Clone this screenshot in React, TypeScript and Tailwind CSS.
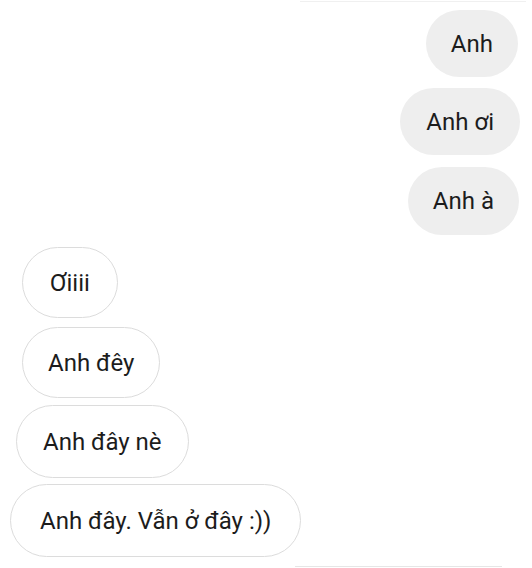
import React from "react";

type Msg = { text: string; mine: boolean; cls: string };

const messages: Msg[] = [
  { text: "Anh", mine: true, cls: "mt-[10px] mr-[14px] h-[67px] px-[25px]" },
  { text: "Anh ơi", mine: true, cls: "mt-[11px] mr-[12px] h-[67px] px-[26px]" },
  { text: "Anh à", mine: true, cls: "mt-[12px] mr-[13px] h-[68px] px-[25px]" },
  { text: "Ơiiii", mine: false, cls: "mt-[12px] ml-[22px] h-[71px] px-[27px]" },
  { text: "Anh đêy", mine: false, cls: "mt-[9px] ml-[22px] h-[71px] px-[25px]" },
  { text: "Anh đây nè", mine: false, cls: "mt-[7px] ml-[16px] h-[73px] px-[26px]" },
  { text: "Anh đây. Vẫn ở đây :))", mine: false, cls: "mt-[6px] ml-[10px] h-[73px] px-[29px]" },
];

const Bubble = ({ msg }: { msg: Msg }) => (
  <div
    className={
      msg.mine
        ? `self-end flex items-center rounded-full bg-[#eeeeee] ${msg.cls}`
        : `self-start flex items-center rounded-full bg-white border border-[#dcdcdc] ${msg.cls}`
    }
  >
    <span className="text-[24px] leading-none text-[#1c1c1c] whitespace-nowrap">{msg.text}</span>
  </div>
);

export default function App() {
  return (
    <div
      className="w-[532px] h-[568px] bg-white overflow-hidden flex flex-col relative"
      style={{ fontFamily: "Roboto, 'Noto Sans', sans-serif" }}
    >
      {messages.map((m, i) => (
        <Bubble key={i} msg={m} />
      ))}
      <div className="absolute top-[1px] left-[300px] right-[6px] h-px bg-[#f0f0f0]" />
      <div className="absolute bottom-[1px] left-[295px] right-[30px] h-px bg-[#e6e6e6]" />
    </div>
  );
}
